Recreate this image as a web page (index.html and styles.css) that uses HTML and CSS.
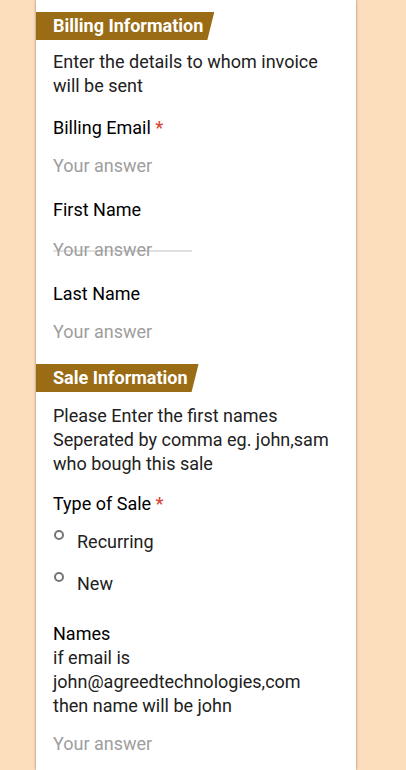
FILE: index.html
```
<!DOCTYPE html>
<html lang="en">
<head>
<meta charset="utf-8">
<meta name="viewport" content="width=device-width, initial-scale=1">
<title>Billing Information</title>
<link rel="stylesheet" href="styles.css">
</head>
<body>
<form class="sheet">
  <section class="section section-billing">
    <h2 class="banner">Billing Information</h2>
    <p class="intro">Enter the details to whom invoice will be sent</p>
    <div class="field">
      <label for="email">Billing Email <span class="required">*</span></label>
      <input class="answer" id="email" type="email" placeholder="Your answer" required>
    </div>
    <div class="field field-lined">
      <label for="first">First Name</label>
      <input class="answer" id="first" type="text" placeholder="Your answer">
    </div>
    <div class="field">
      <label for="last">Last Name</label>
      <input class="answer" id="last" type="text" placeholder="Your answer">
    </div>
  </section>
  <section class="section section-sale">
    <h2 class="banner">Sale Information</h2>
    <p class="intro">Please Enter the first names Seperated by comma eg. john,sam who bough this sale</p>
    <fieldset class="choices">
      <legend>Type of Sale <span class="required">*</span></legend>
      <label class="choice"><input type="radio" name="sale" required>Recurring</label>
      <label class="choice"><input type="radio" name="sale">New</label>
    </fieldset>
    <div class="field">
      <label for="names">Names</label>
      <p class="help" id="names-help">if email is john@agreedtechnologies,com then name will be john</p>
      <input class="answer" id="names" type="text" placeholder="Your answer" aria-describedby="names-help">
    </div>
  </section>
</form>
</body>
</html>
```
FILE: styles.css
```
* {
  box-sizing: border-box;
}

body {
  margin: 0;
  background: #fcdebc;
  color: #212121;
  font: 18px/24px Roboto, sans-serif;
}

.sheet {
  min-height: 100vh;
  margin: 0 50px 0 36px;
  padding: 12px 0 14px;
  background: #fff;
  box-shadow: 0 0 2px rgba(0, 0, 0, 0.4), 0 0 4px rgba(0, 0, 0, 0.1);
}

.section {
  display: flex;
  flex-direction: column;
}

.section-billing {
  gap: 18px;
}

.section-sale {
  gap: 16px;
  margin-top: 20px;
}

.banner {
  align-self: flex-start;
  margin: 0;
  padding: 2px 11px 2px 17px;
  background: #996c15;
  clip-path: polygon(0 0, 100% 0, calc(100% - 7px) 100%, 0 100%);
  color: #fff;
  font-size: 18px;
  font-weight: 700;
}

.intro {
  margin: -8px 17px 0;
}

.section-sale .intro {
  margin-top: -4px;
}

.field {
  display: flex;
  flex-direction: column;
  margin: 0 17px;
  color: #000;
}

.field + .field {
  margin-top: 2px;
}

.required {
  color: #db4437;
  font-weight: 500;
}

.answer {
  width: 100%;
  height: 24px;
  margin: 14px 0 0;
  padding: 0;
  border: 0;
  outline: 0;
  background: transparent;
  color: #212121;
  font: inherit;
}

.answer::placeholder {
  color: #9e9e9e;
  opacity: 1;
}

.field-lined .answer {
  width: 139px;
  margin-top: 16px;
  background: linear-gradient(#e0e0e0, #e0e0e0) 0 12px / 100% 2px no-repeat;
}

.choices {
  min-width: 0;
  margin: 0 17px 10px;
  padding: 0;
  border: 0;
  color: #000;
}

.choices legend {
  padding: 0;
}

.choice {
  display: flex;
  align-items: flex-start;
  gap: 13px;
  margin-top: 18px;
  color: #212121;
}

legend + .choice {
  margin-top: 14px;
}

.choice input {
  appearance: none;
  width: 10px;
  height: 10px;
  margin: 0 0 0 1px;
  border: 2px solid #757575;
  border-radius: 50%;
  background: #fff;
}

.choice input:checked {
  background: #996c15;
}

.help {
  margin: 0;
  color: #212121;
}
```
